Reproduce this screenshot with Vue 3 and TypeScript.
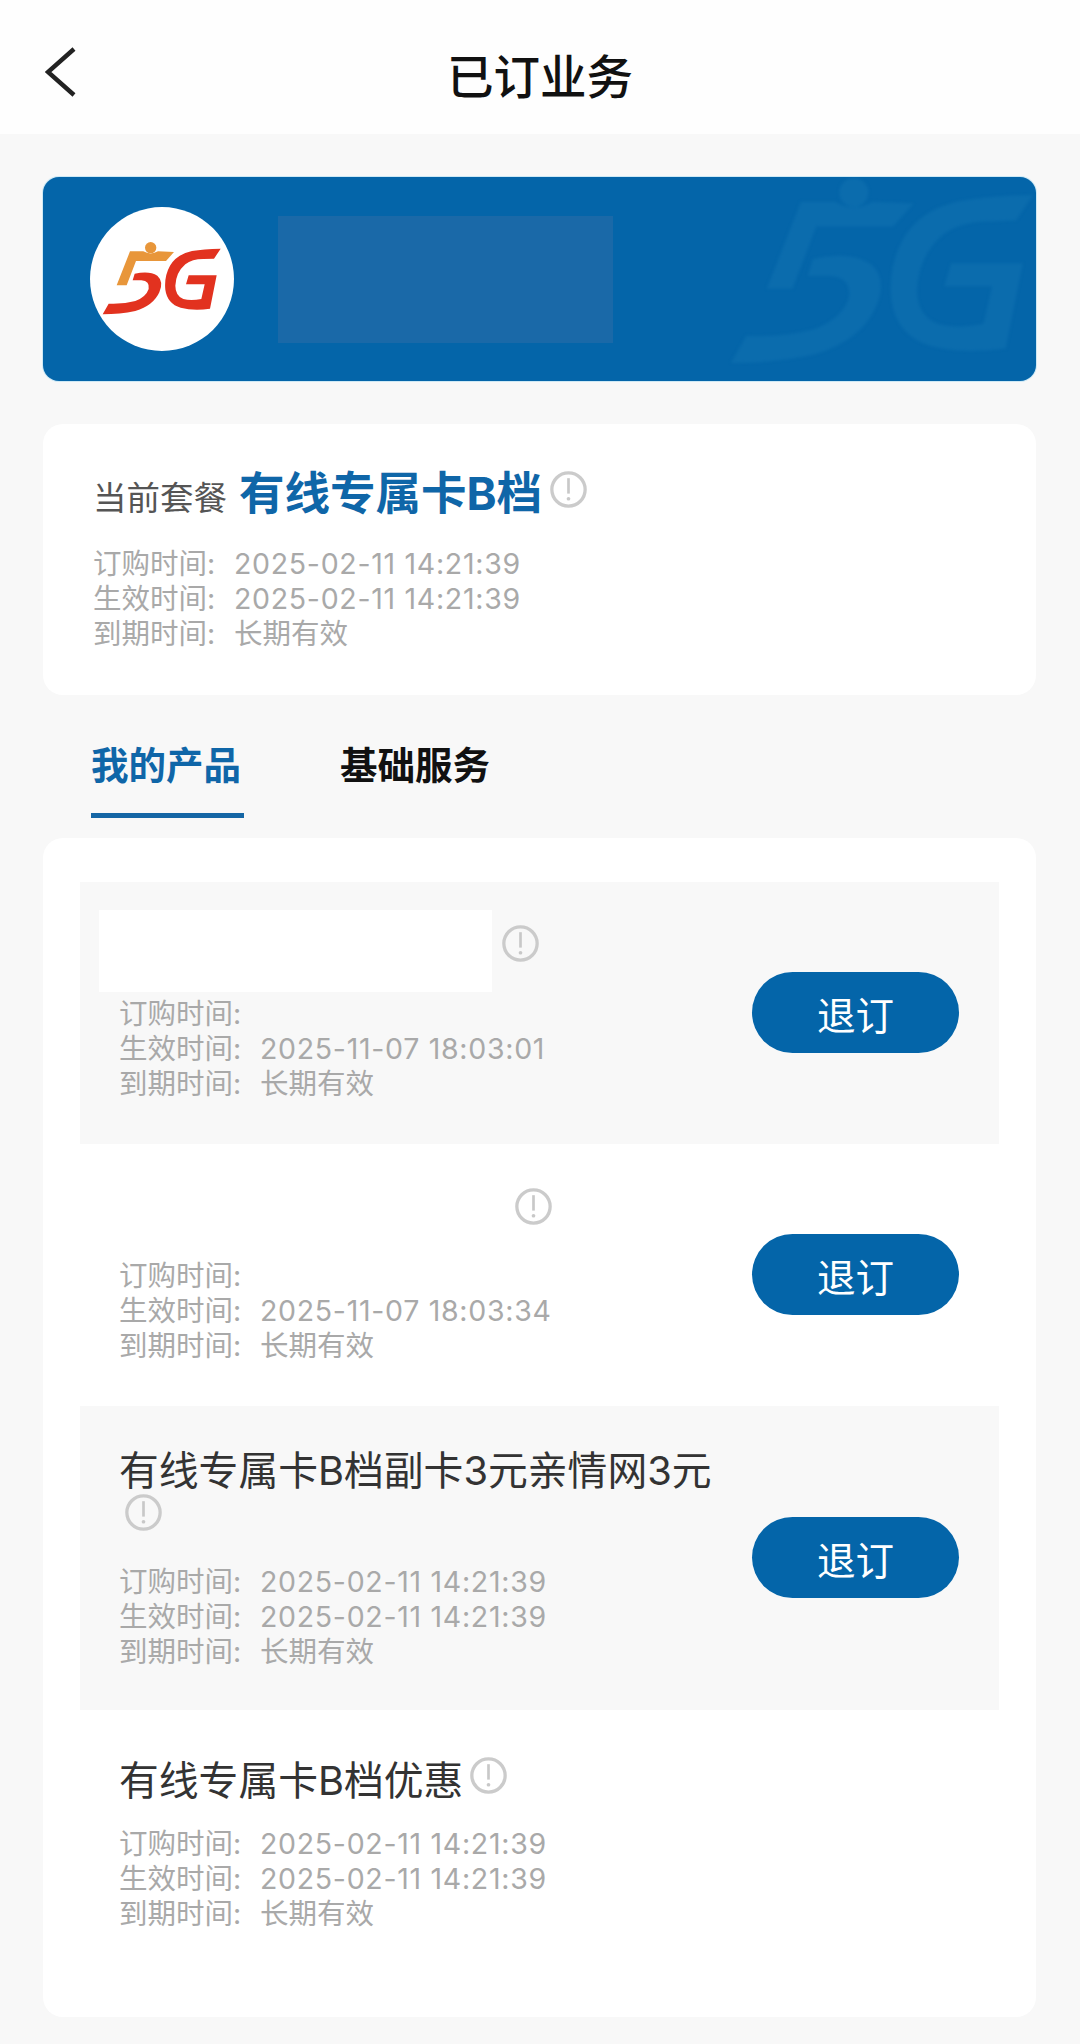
<template>
  <div class="page">
    <header class="topbar">
      <svg class="back" viewBox="0 0 32 50" width="32" height="50">
        <path d="M29 2 L3 25 L29 48" fill="none" stroke="#222" stroke-width="4.4" />
      </svg>
      <h1>已订业务</h1>
    </header>

    <main class="content">
      <section class="banner">
        <svg class="watermark" viewBox="128 155 354 217" width="302" height="187">
          <g fill="#0b6cad">
            <use href="#five-g" />
          </g>
        </svg>
        <svg class="logo" viewBox="90 50 432 432" width="144" height="144">
          <defs>
            <g id="five-g">
              <path d="M210 183 L250 183 Q272 196 294 183 L342 185 L318 212 L228 212 L200 285 L170 285 Z" />
              <circle cx="272" cy="172" r="17" />
              <path d="M224 250 Q268 240 292 256 Q312 274 298 306 Q280 346 226 362 Q180 372 128 372 L146 340 Q190 342 226 332 Q258 320 266 296 Q270 272 244 270 L218 270 Z" />
              <path d="M482 175 Q430 176 396 182 Q350 192 330 226 Q312 258 316 298 Q322 340 362 352 Q400 362 450 355 L470 255 L386 255 L378 282 L434 282 L424 326 Q392 332 370 326 Q346 316 346 286 Q348 246 376 222 Q396 206 430 206 L462 205 Z" />
            </g>
          </defs>
          <circle cx="306" cy="266" r="216" fill="#fff" />
          <g fill="#e2321f">
            <path d="M224 250 Q268 240 292 256 Q312 274 298 306 Q280 346 226 362 Q180 372 128 372 L146 340 Q190 342 226 332 Q258 320 266 296 Q270 272 244 270 L218 270 Z" />
            <path d="M482 175 Q430 176 396 182 Q350 192 330 226 Q312 258 316 298 Q322 340 362 352 Q400 362 450 355 L470 255 L386 255 L378 282 L434 282 L424 326 Q392 332 370 326 Q346 316 346 286 Q348 246 376 222 Q396 206 430 206 L462 205 Z" />
          </g>
          <g fill="#e8963a">
            <path d="M210 183 L250 183 Q272 196 294 183 L342 185 L318 212 L228 212 L200 285 L170 285 Z" />
            <circle cx="272" cy="172" r="17" />
          </g>
        </svg>
        <div class="blur-name"></div>
      </section>

      <section class="summary">
        <div class="plan">
          <span class="plan-label">当前套餐</span>
          <span class="plan-name">有线专属卡B档</span>
          <svg class="info plan-info" viewBox="0 0 36 36">
            <circle cx="18" cy="18" r="16.2" />
            <path d="M18 7 V22" />
            <circle class="dot" cx="18" cy="27" r="1.8" />
          </svg>
        </div>
        <div class="meta">
          <template v-for="m in planMeta" :key="m.label">
            <span>{{ m.label }}:</span><span class="val">{{ m.value }}</span>
          </template>
        </div>
      </section>

      <nav class="tabs">
        <a class="tab active">我的产品</a>
        <a class="tab">基础服务</a>
      </nav>

      <section class="products">
        <div
          v-for="p in products"
          :key="p.id"
          class="product"
          :class="[p.variant, { shaded: p.id % 2 === 1 }]"
        >
          <div class="product-main">
            <div class="product-title">
              <template v-if="p.name">{{ p.name }}</template>
              <i v-else class="redact"></i>
              <svg class="info" viewBox="0 0 36 36">
                <circle cx="18" cy="18" r="16.2" />
                <path d="M18 7 V22" />
                <circle class="dot" cx="18" cy="27" r="1.8" />
              </svg>
            </div>
            <div class="meta">
              <template v-for="m in p.meta" :key="m.label">
                <span>{{ m.label }}:</span><span class="val">{{ m.value }}</span>
              </template>
            </div>
          </div>
          <button v-if="p.canCancel" class="cancel">退订</button>
        </div>
      </section>
    </main>
  </div>
</template>

<script setup lang="ts">
interface MetaLine {
  label: string
  value: string
}

interface Product {
  id: number
  name: string
  variant: string
  canCancel: boolean
  meta: MetaLine[]
}

function metaLines(ordered: string, active: string): MetaLine[] {
  return [
    { label: '订购时间', value: ordered },
    { label: '生效时间', value: active },
    { label: '到期时间', value: '长期有效' },
  ]
}

const planMeta = metaLines('2025-02-11 14:21:39', '2025-02-11 14:21:39')

const products: Product[] = [
  { id: 1, name: '', variant: 'hidden-a', canCancel: true, meta: metaLines('', '2025-11-07 18:03:01') },
  { id: 2, name: '', variant: 'hidden-b', canCancel: true, meta: metaLines('', '2025-11-07 18:03:34') },
  {
    id: 3,
    name: '有线专属卡B档副卡3元亲情网3元',
    variant: 'wrapped',
    canCancel: true,
    meta: metaLines('2025-02-11 14:21:39', '2025-02-11 14:21:39'),
  },
  {
    id: 4,
    name: '有线专属卡B档优惠',
    variant: 'single',
    canCancel: false,
    meta: metaLines('2025-02-11 14:21:39', '2025-02-11 14:21:39'),
  },
]
</script>

<style>
html,
body {
  margin: 0;
  background: #f8f8f8;
}
</style>

<style scoped>
.page {
  width: 1080px;
  min-height: 2044px;
  background: #f8f8f8;
  font-family: Inter, "Noto Sans CJK SC", sans-serif;
  color: #333;
}

.topbar {
  height: 134px;
  box-sizing: border-box;
  background: #fefefe;
  position: relative;
  display: flex;
  justify-content: center;
  padding-top: 46px;
}

.topbar h1 {
  margin: 0;
  font-size: 46.5px;
  line-height: 62px;
  font-weight: 500;
  color: #111;
}

.back {
  position: absolute;
  left: 45px;
  top: 47px;
}

.content {
  padding: 43px 44px 26px 43px;
}

.banner {
  position: relative;
  height: 204px;
  border-radius: 16px;
  background: #0465a9;
  box-shadow: 0 0 0 1px rgba(130, 205, 240, 0.35);
  overflow: hidden;
  display: flex;
  align-items: center;
  padding-left: 47px;
}

.watermark {
  position: absolute;
  right: 3px;
  top: 0;
  filter: blur(1.5px);
}

.logo {
  flex: none;
  position: relative;
}

.blur-name {
  margin-left: 44px;
  width: 335px;
  height: 127px;
  background: #1a69a8;
}

.summary {
  margin-top: 43px;
  background: #fff;
  border-radius: 20px;
  padding: 44px 50px 44px;
}

.plan {
  display: flex;
  align-items: baseline;
  height: 52px;
  margin-bottom: 26px;
}

.plan-label {
  font-size: 33.5px;
  color: #555;
}

.plan-name {
  margin-left: 12px;
  font-size: 45.5px;
  line-height: 52px;
  font-weight: 700;
  color: #0f66a8;
}

.plan-info {
  align-self: flex-start;
  margin: 3px 0 0 8px;
}

.info {
  width: 37px;
  height: 37px;
  flex: none;
  fill: none;
  stroke: #cbcbcb;
  stroke-width: 3.2;
}

.info path {
  stroke: #c8c8c8;
  stroke-width: 2.6;
}

.info .dot {
  fill: #c8c8c8;
  stroke: none;
}

.meta {
  display: grid;
  grid-template-columns: 141px 1fr;
  font-size: 28.5px;
  line-height: 35px;
  color: #a9a9a9;
}

.meta span {
  min-height: 35px;
  white-space: nowrap;
}

.meta .val {
  letter-spacing: 0.7px;
}

.meta .val:last-child {
  letter-spacing: 0;
}

.tabs {
  display: flex;
  gap: 96px;
  height: 143px;
  box-sizing: border-box;
  padding: 47px 0 0 48px;
}

.tab {
  font-size: 37.5px;
  line-height: 48px;
  font-weight: 700;
  color: #111;
  height: 71px;
}

.tab.active {
  color: #0f66a8;
  border-bottom: 5px solid #1566a5;
  padding-right: 3px;
}

.products {
  background: #fff;
  border-radius: 20px;
  padding: 44px 37px 86px;
}

.product {
  display: flex;
  align-items: center;
  justify-content: space-between;
  padding: 0 40px 0 39px;
}

.product.shaded {
  background: #f8f8f8;
}

.product-main {
  flex: 1;
  min-width: 0;
  align-self: flex-start;
  padding-right: 20px;
}

.product-title {
  font-size: 39.8px;
  line-height: 44px;
  color: #333;
}

.product-title .info {
  vertical-align: top;
  margin: -2px 0 0 7px;
}

.hidden-a,
.hidden-b {
  height: 262px;
}

.hidden-a .product-main,
.hidden-b .product-main {
  padding-top: 28px;
}

.hidden-a .product-title,
.hidden-b .product-title {
  height: 82px;
  margin-bottom: 4px;
}

.redact {
  display: inline-block;
  vertical-align: top;
  height: 82px;
  background: #fff;
}

.hidden-a .redact {
  width: 393px;
  margin-left: -20px;
}

.hidden-b .redact {
  width: 386px;
  margin-left: 0;
}

.hidden-a .product-title .info {
  margin: 15px 0 0 10px;
}

.hidden-b .product-title .info {
  margin: 16px 0 0 10px;
}

.wrapped {
  height: 304px;
}

.wrapped .product-main {
  padding-top: 43px;
}

.wrapped .product-title {
  margin-bottom: 27px;
}

.wrapped .product-title .info {
  margin: 1px 0 0 6px;
}

.single .product-main {
  padding-top: 49px;
}

.single .product-title {
  margin-bottom: 23px;
}

.cancel {
  flex: none;
  width: 207px;
  height: 81px;
  margin-top: -1px;
  border: none;
  border-radius: 41px;
  background: #0465a9;
  color: #fff;
  font-family: inherit;
  font-size: 38.5px;
  padding: 0;
}
</style>
